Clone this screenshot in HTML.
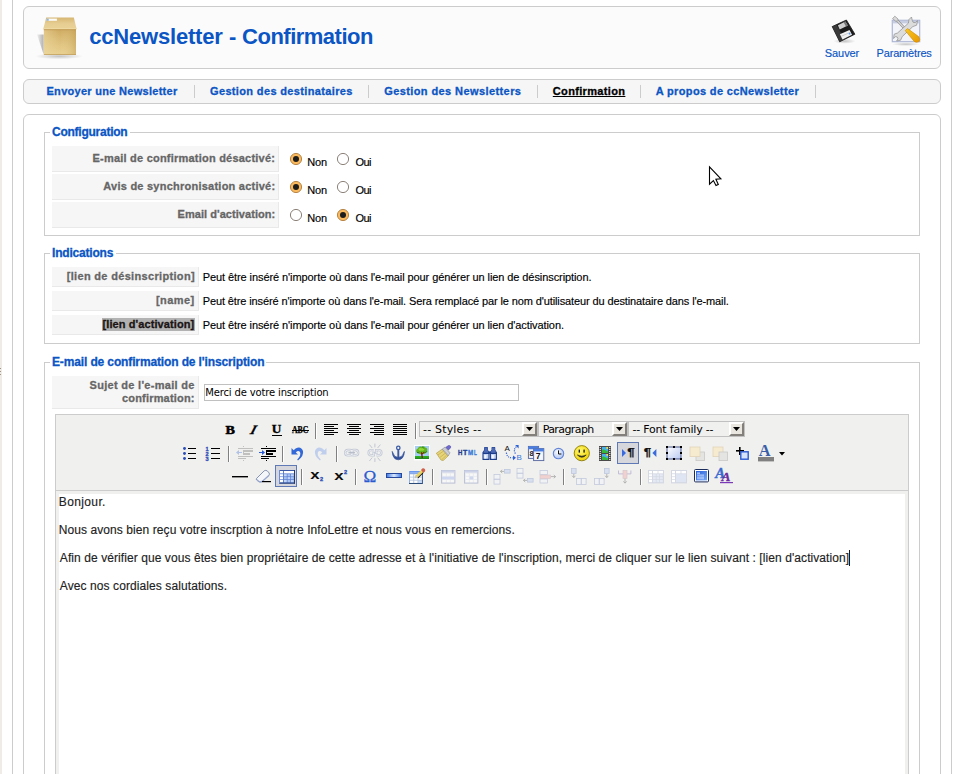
<!DOCTYPE html>
<html lang="fr">
<head>
<meta charset="utf-8">
<title>ccNewsletter - Confirmation</title>
<style>
html,body{margin:0;padding:0;}
body{width:960px;height:774px;overflow:hidden;background:#fff;position:relative;font-family:'Liberation Sans',sans-serif;font-size:11px;color:#333;}
.abs,.t,.box,.ln{position:absolute;}
.t{white-space:nowrap;height:20px;}
.box{border:1px solid #ccc;border-radius:6px;box-sizing:border-box;}
.fs{position:absolute;border:1px solid #ccc;box-sizing:border-box;}
.lg{position:absolute;background:#fff;height:14px;}
.key{position:absolute;background:#f6f6f6;border-bottom:1px solid #e9e9e9;border-right:1px solid #e9e9e9;box-sizing:border-box;}
.ln{background:#ccc;}
.radio{position:absolute;width:13px;height:13px;}

</style>
</head>
<body>
<div class="abs" style="left:0;top:0;width:2px;height:774px;background:#efebe7"></div>
<div class="abs" style="left:0;top:368px;width:1px;height:1px;background:#a39585"></div>
<div class="abs" style="left:0;top:371px;width:1px;height:1px;background:#a39585"></div>
<div class="abs" style="left:0;top:374px;width:1px;height:1px;background:#a39585"></div>
<div class="ln" style="left:12px;top:0;width:1px;height:774px"></div>
<div class="ln" style="left:951px;top:0;width:1px;height:774px"></div>

<div class="box" id="toolbar-box" style="left:23px;top:6px;width:918px;height:63px;background:#fbfbfb"></div>
<div class="box" id="submenu-box" style="left:23px;top:79px;width:918px;height:25px;background:#f6f6f6"></div>
<div class="box" id="element-box" style="left:23px;top:114px;width:918px;height:700px;background:#fff"></div>

<div class="ln" style="left:194px;top:85px;width:1px;height:13px"></div>
<div class="ln" style="left:368px;top:85px;width:1px;height:13px"></div>
<div class="ln" style="left:537px;top:85px;width:1px;height:13px"></div>
<div class="ln" style="left:640px;top:85px;width:1px;height:13px"></div>
<div class="ln" style="left:815px;top:85px;width:1px;height:13px"></div>

<div class="fs" style="left:44px;top:132px;width:876px;height:104px"></div>
<div class="lg" style="left:50px;top:125px;width:80px"></div>
<div class="key" style="left:52px;top:146px;width:227px;height:26px"></div>
<div class="key" style="left:52px;top:174px;width:227px;height:26px"></div>
<div class="key" style="left:52px;top:202px;width:227px;height:26px"></div>

<div class="fs" style="left:44px;top:253px;width:876px;height:91px"></div>
<div class="lg" style="left:50px;top:246px;width:66px"></div>
<div class="key" style="left:52px;top:267px;width:147px;height:20px"></div>
<div class="key" style="left:52px;top:291px;width:147px;height:20px"></div>
<div class="key" style="left:52px;top:315px;width:147px;height:20px"></div>
<div class="abs" style="left:101.5px;top:318px;width:93.5px;height:13px;background:#b2b2b2"></div>

<div class="fs" style="left:44px;top:362px;width:876px;height:500px"></div>
<div class="lg" style="left:50px;top:355px;width:216px"></div>
<div class="key" style="left:52px;top:376px;width:147px;height:33px"></div>
<div class="abs" style="left:204px;top:384px;width:315px;height:17px;box-sizing:border-box;border:1px solid #c0c0c0;background:#fff"></div>

<div class="abs" id="editor" style="left:55px;top:414px;width:854px;height:400px;box-sizing:border-box;border:1px solid #ccc;background:#f0f0ee"></div>
<div class="ln" style="left:56px;top:490px;width:852px;height:1px"></div>
<div class="abs" style="left:59px;top:494px;width:846px;height:300px;background:#fff"></div>
<div class="abs" style="left:849px;top:550px;width:1px;height:16px;background:#1a1a1a"></div>

<svg class="abs" style="left:0;top:0;pointer-events:none" width="960" height="774" viewBox="0 0 960 774">
<defs>
<linearGradient id="gFlap" x1="0" y1="0" x2="0" y2="1"><stop offset="0" stop-color="#d6b671"/><stop offset="0.5" stop-color="#e6cc90"/><stop offset="1" stop-color="#ead398"/></linearGradient>
<linearGradient id="gFront" x1="0" y1="0" x2="0.25" y2="1"><stop offset="0" stop-color="#c8a258"/><stop offset="0.45" stop-color="#d9ba74"/><stop offset="1" stop-color="#e8cf90"/></linearGradient>
<linearGradient id="gFrontX" x1="0" y1="0" x2="1" y2="0"><stop offset="0" stop-color="#f0dca4" stop-opacity="0.6"/><stop offset="0.5" stop-color="#f0dca4" stop-opacity="0"/><stop offset="1" stop-color="#b08838" stop-opacity="0.35"/></linearGradient>
<linearGradient id="gShad" x1="0" y1="0" x2="1" y2="0"><stop offset="0" stop-color="#000" stop-opacity="0.04"/><stop offset="1" stop-color="#000" stop-opacity="0.3"/></linearGradient>
<radialGradient id="gGround"><stop offset="0" stop-color="#000" stop-opacity="0.22"/><stop offset="1" stop-color="#000" stop-opacity="0"/></radialGradient>
<linearGradient id="gLayer" x1="0" y1="0" x2="1" y2="1"><stop offset="0" stop-color="#fff"/><stop offset="1" stop-color="#b8c8f0"/></linearGradient>
<linearGradient id="gBar" x1="0" y1="0" x2="1" y2="0"><stop offset="0" stop-color="#3a78e8"/><stop offset="0.5" stop-color="#dce8fc"/><stop offset="1" stop-color="#3a78e8"/></linearGradient>
<linearGradient id="gHandle" x1="0" y1="0" x2="1" y2="1"><stop offset="0" stop-color="#f8c820"/><stop offset="1" stop-color="#e89800"/></linearGradient>
<radialGradient id="gSmile" cx="0.4" cy="0.35" r="0.7"><stop offset="0" stop-color="#fff870"/><stop offset="1" stop-color="#f0d000"/></radialGradient>
<radialGradient id="gClock" cx="0.4" cy="0.35" r="0.7"><stop offset="0" stop-color="#fff"/><stop offset="1" stop-color="#a8c0f0"/></radialGradient>
<linearGradient id="gFull" x1="0" y1="0" x2="1" y2="1"><stop offset="0" stop-color="#2860d8"/><stop offset="1" stop-color="#78a8f8"/></linearGradient>
</defs>
<ellipse cx="59" cy="56.3" rx="24" ry="3" fill="url(#gGround)"/>
<polygon points="37,34.5 43.6,34.5 43.6,54.3" fill="url(#gShad)"/>
<rect x="43.9" y="28.8" width="32.1" height="25.9" fill="url(#gFront)"/>
<rect x="43.9" y="28.8" width="32.1" height="25.9" fill="url(#gFrontX)"/>
<polygon points="46.2,17.4 73.8,17.4 76.7,29.3 43.2,29.3" fill="url(#gFlap)"/>
<rect x="43.3" y="28.3" width="33.3" height="0.9" fill="#f0dca8"/>
<rect x="43.9" y="29.2" width="32.1" height="1" fill="#bf9a52" opacity="0.85"/>
<rect x="43.9" y="54" width="32.1" height="0.8" fill="#b8924a" opacity="0.8"/>
<rect x="46.9" y="18.6" width="10" height="2.2" fill="#fbfbfb"/>
<rect x="46.9" y="18.6" width="1.8" height="2.2" fill="#86b8f6"/>
<ellipse cx="844.5" cy="41.2" rx="11" ry="2.6" fill="url(#gGround)"/>
<polygon points="832.2,26.6 846.4,20 854.9,34.2 839.7,41.8" fill="#1c1c1c" stroke="#1c1c1c" stroke-width="0.8" stroke-linejoin="round"/>
<polygon points="832.6,26.6 836.5,24.8 844.5,39.2 839.8,41.4" fill="#3a3a3a"/>
<polygon points="837.9,25.3 845.4,21.4 847.8,25.6 839.7,29.6" fill="#cfcfcf"/>
<polygon points="843.6,22.3 845.4,21.4 847.8,25.6 846,26.5" fill="#777"/>
<polygon points="839.9,34.3 849.5,30 852,34.7 842.5,39.4" fill="#f2f2f2"/>
<polygon points="840.9,36.1 850.5,31.8 850.8,32.4 841.2,36.7" fill="#c8c8c8"/>
<circle cx="849.6" cy="33.7" r="0.9" fill="#5a96f0"/>
<ellipse cx="906" cy="44.2" rx="14" ry="1.8" fill="url(#gGround)"/>
<rect x="892.3" y="20.3" width="27.4" height="21.4" fill="#f3f4fa" stroke="#aeb7d4" stroke-width="1.2"/>
<rect x="892.8" y="20.8" width="26.4" height="2.6" fill="#c8cee2"/>
<path d="M896.4,19.6 L905.8,29.6" stroke="#8a8a8a" stroke-width="2.4" fill="none"/>
<path d="M896.4,19.6 L905.8,29.6" stroke="#e4e4e4" stroke-width="1.1" fill="none"/>
<polygon points="892.6,18.6 894.8,16.2 898.2,19.2 896.2,21.6" fill="#dcdcdc" stroke="#8e8e8e" stroke-width="0.7"/>
<path d="M911.5,17 L909,19.5 L908.4,23.2 L897.5,33 L894.2,34.2 L893.5,38.5 L895.6,36.6 L897.2,37 L898,38.8 L896.6,41 L900.6,40.2 L902.2,36.6 L912.8,26.6 L916.6,25.2 L917.6,20.6 L915.2,22.6 L913,22.2 L912.2,20.2 Z" fill="#dcdcdc" stroke="#949494" stroke-width="0.8" stroke-linejoin="round"/>
<path d="M905.2,30.6 L907.6,28.6 L918.6,36.6 Q920.6,39.6 919,41.6 Q916.6,43 914.2,41.4 Z" fill="url(#gHandle)" stroke="#d08800" stroke-width="0.6"/>
<path d="M709.5,166.8 L709.5,184.2 L713.4,180.6 L716,185.6 L718.3,184.4 L715.9,179.3 L720.9,178.9 Z" fill="#fff" stroke="#000" stroke-width="1.1" stroke-linejoin="miter"/>
<circle cx="296" cy="159" r="5.6" fill="#f9b95c" stroke="#b78648" stroke-width="1"/>
<circle cx="296" cy="159" r="3" fill="#1c1c1c"/>
<circle cx="343" cy="159" r="5.6" fill="#fff" stroke="#8c8279" stroke-width="1"/>
<circle cx="296" cy="187" r="5.6" fill="#f9b95c" stroke="#b78648" stroke-width="1"/>
<circle cx="296" cy="187" r="3" fill="#1c1c1c"/>
<circle cx="343" cy="187" r="5.6" fill="#fff" stroke="#8c8279" stroke-width="1"/>
<circle cx="296" cy="215" r="5.6" fill="#fff" stroke="#8c8279" stroke-width="1"/>
<circle cx="343" cy="215" r="5.6" fill="#f9b95c" stroke="#b78648" stroke-width="1"/>
<circle cx="343" cy="215" r="3" fill="#1c1c1c"/>
<rect x="419.5" y="421.5" width="118" height="15" fill="#f0f0ee" stroke="#c0c0c0"/>
<rect x="522" y="422" width="15" height="14" fill="#e9e5df"/>
<polygon points="522,422 537,422 535,424 524,424 524,434 522,436" fill="#fff"/>
<polygon points="537,422 537,436 522,436 524,434 535,434 535,424" fill="#837f7a"/>
<polygon points="526,427 533,427 529.5,431" fill="#000"/>
<rect x="538.5" y="421.5" width="89" height="15" fill="#f0f0ee" stroke="#c0c0c0"/>
<rect x="612" y="422" width="15" height="14" fill="#e9e5df"/>
<polygon points="612,422 627,422 625,424 614,424 614,434 612,436" fill="#fff"/>
<polygon points="627,422 627,436 612,436 614,434 625,434 625,424" fill="#837f7a"/>
<polygon points="616,427 623,427 619.5,431" fill="#000"/>
<rect x="628.5" y="421.5" width="116" height="15" fill="#f0f0ee" stroke="#c0c0c0"/>
<rect x="729" y="422" width="15" height="14" fill="#e9e5df"/>
<polygon points="729,422 744,422 742,424 731,424 731,434 729,436" fill="#fff"/>
<polygon points="744,422 744,436 729,436 731,434 742,434 742,424" fill="#837f7a"/>
<polygon points="733,427 740,427 736.5,431" fill="#000"/>
<text x="225.6" y="434" font-family="'Liberation Serif',serif" font-size="12.9" font-weight="bold" font-style="normal" fill="#000" stroke="#000" stroke-width="0.55" textLength="9.4" lengthAdjust="spacingAndGlyphs">B</text>
<g transform="translate(249.1,434) skewX(-27)">
<text x="0" y="0" font-family="'Liberation Serif',serif" font-size="12.9" font-weight="bold" font-style="normal" fill="#000" stroke="#000" stroke-width="0.3">I</text>
</g>
<text x="271.8" y="433" font-family="'Liberation Serif',serif" font-size="13.2" font-weight="bold" font-style="normal" fill="#000" stroke="#000" stroke-width="0.35" textLength="9.6" lengthAdjust="spacingAndGlyphs">U</text>
<rect x="272" y="435" width="10" height="1" fill="#000" />
<text x="292" y="433.2" font-family="'Liberation Serif',serif" font-size="9.4" font-weight="bold" font-style="normal" fill="#000" stroke="#000" stroke-width="0.25" textLength="16.4" lengthAdjust="spacingAndGlyphs">ABC</text>
<rect x="292" y="430" width="17" height="1" fill="#000" />
<rect x="315" y="423" width="1" height="16" fill="#808080" />
<rect x="316" y="423" width="1" height="16" fill="#fff" />
<rect x="324" y="424" width="14" height="1" fill="#000" />
<rect x="347" y="424" width="14" height="1" fill="#000" />
<rect x="370" y="424" width="14" height="1" fill="#000" />
<rect x="393" y="424" width="14" height="1" fill="#000" />
<rect x="324" y="426" width="10" height="1" fill="#000" />
<rect x="349" y="426" width="10" height="1" fill="#000" />
<rect x="374" y="426" width="10" height="1" fill="#000" />
<rect x="393" y="426" width="14" height="1" fill="#000" />
<rect x="324" y="428" width="14" height="1" fill="#000" />
<rect x="347" y="428" width="14" height="1" fill="#000" />
<rect x="370" y="428" width="14" height="1" fill="#000" />
<rect x="393" y="428" width="14" height="1" fill="#000" />
<rect x="324" y="430" width="10" height="1" fill="#000" />
<rect x="349" y="430" width="10" height="1" fill="#000" />
<rect x="374" y="430" width="10" height="1" fill="#000" />
<rect x="393" y="430" width="14" height="1" fill="#000" />
<rect x="324" y="432" width="14" height="1" fill="#000" />
<rect x="347" y="432" width="14" height="1" fill="#000" />
<rect x="370" y="432" width="14" height="1" fill="#000" />
<rect x="393" y="432" width="14" height="1" fill="#000" />
<rect x="324" y="434" width="10" height="1" fill="#000" />
<rect x="349" y="434" width="10" height="1" fill="#000" />
<rect x="374" y="434" width="10" height="1" fill="#000" />
<rect x="393" y="434" width="14" height="1" fill="#000" />
<rect x="415" y="423" width="1" height="16" fill="#808080" />
<rect x="416" y="423" width="1" height="16" fill="#fff" />
<circle cx="184.5" cy="448.5" r="1.45" fill="#2a4cb8"/>
<rect x="188" y="448" width="8" height="1" fill="#000" />
<circle cx="184.5" cy="453.5" r="1.45" fill="#2a4cb8"/>
<rect x="188" y="453" width="8" height="1" fill="#000" />
<circle cx="184.5" cy="458.5" r="1.45" fill="#2a4cb8"/>
<rect x="188" y="458" width="8" height="1" fill="#000" />
<rect x="211" y="448" width="9" height="1" fill="#000" />
<rect x="211" y="453" width="9" height="1" fill="#000" />
<rect x="211" y="458" width="9" height="1" fill="#000" />
<text x="205.6" y="451" font-family="'Liberation Sans',sans-serif" font-size="5.6" font-weight="bold" font-style="normal" fill="#2a4cb8" stroke="#2a4cb8" stroke-width="0.3">1</text>
<text x="205.6" y="456" font-family="'Liberation Sans',sans-serif" font-size="5.6" font-weight="bold" font-style="normal" fill="#2a4cb8" stroke="#2a4cb8" stroke-width="0.3">2</text>
<text x="205.6" y="461" font-family="'Liberation Sans',sans-serif" font-size="5.6" font-weight="bold" font-style="normal" fill="#2a4cb8" stroke="#2a4cb8" stroke-width="0.3">3</text>
<rect x="228" y="446" width="1" height="16" fill="#808080" />
<rect x="229" y="446" width="1" height="16" fill="#fff" />
<g opacity="0.45">
<rect x="238" y="448" width="15" height="1" fill="#888" />
<rect x="243" y="450" width="10" height="2" fill="#888" />
<rect x="243" y="453" width="7" height="2" fill="#888" />
<rect x="238" y="456" width="15" height="1" fill="#888" />
<rect x="238" y="458" width="8" height="1" fill="#888" />
<rect x="243" y="446" width="1" height="1" fill="#888" />
<rect x="243" y="448" width="1" height="1" fill="#888" />
<rect x="243" y="450" width="1" height="1" fill="#888" />
<rect x="243" y="452" width="1" height="1" fill="#888" />
<rect x="243" y="454" width="1" height="1" fill="#888" />
<rect x="243" y="456" width="1" height="1" fill="#888" />
<rect x="243" y="458" width="1" height="1" fill="#888" />
<rect x="243" y="460" width="1" height="1" fill="#888" />
<path d="M242,452 h-3 v-2 l-3,2.5 l3,2.5 v-2 h3 z" fill="#6a8ad8"/>
</g>
<g opacity="1">
<rect x="261" y="448" width="15" height="1" fill="#000" />
<rect x="266" y="450" width="10" height="2" fill="#000" />
<rect x="266" y="453" width="7" height="2" fill="#000" />
<rect x="261" y="456" width="15" height="1" fill="#000" />
<rect x="261" y="458" width="8" height="1" fill="#000" />
<rect x="266" y="446" width="1" height="1" fill="#000" />
<rect x="266" y="448" width="1" height="1" fill="#000" />
<rect x="266" y="450" width="1" height="1" fill="#000" />
<rect x="266" y="452" width="1" height="1" fill="#000" />
<rect x="266" y="454" width="1" height="1" fill="#000" />
<rect x="266" y="456" width="1" height="1" fill="#000" />
<rect x="266" y="458" width="1" height="1" fill="#000" />
<rect x="266" y="460" width="1" height="1" fill="#000" />
<path d="M259,452 h3 v-2 l3,2.5 l-3,2.5 v-2 h-3 z" fill="#2a5ad8"/>
</g>
<rect x="282" y="446" width="1" height="16" fill="#808080" />
<rect x="283" y="446" width="1" height="16" fill="#fff" />
<g transform="" opacity="1"><path d="M291.5,448 L291.5,454.5 L298,454.5 L295.8,452.4 Q298.2,449.8 300,452 Q301.4,455.5 297.2,459.6 L298,460.4 Q304,456 303,451 Q301,445.6 295.6,448.4 L293.6,450.2 Z" fill="#3268d8"/></g>
<g transform="translate(642,0) scale(-1,1)" opacity="0.8"><path d="M315.5,448 L315.5,454.5 L322,454.5 L319.8,452.4 Q322.2,449.8 324,452 Q325.4,455.5 321.2,459.6 L322,460.4 Q328,456 327,451 Q325,445.6 319.6,448.4 L317.6,450.2 Z" fill="#b4c6ec"/></g>
<rect x="336" y="446" width="1" height="16" fill="#808080" />
<rect x="337" y="446" width="1" height="16" fill="#fff" />
<g fill="none" stroke="#c2c7d4" stroke-width="2.3"><rect x="345.2" y="450" width="7.4" height="5.4" rx="2.7"/><rect x="350.8" y="450" width="7.4" height="5.4" rx="2.7"/></g>
<g fill="none" stroke="#f4f5f8" stroke-width="0.8"><rect x="345.2" y="450" width="7.4" height="5.4" rx="2.7"/><rect x="350.8" y="450" width="7.4" height="5.4" rx="2.7"/></g>
<rect x="348.4" y="452.1" width="6.6" height="1.2" fill="#b4bac8"/>
<g fill="none" stroke="#c2c7d4" stroke-width="2.3"><path d="M373.6,450.2 h-2.4 a2.6,2.6 0 0 0 0,5.2 h2.6 v-2.4 h-1.6"/><path d="M376.4,455.4 h2.4 a2.6,2.6 0 0 0 0,-5.2 h-2.6 v2.4 h1.6"/></g>
<g fill="none" stroke="#f4f5f8" stroke-width="0.8"><path d="M373.6,450.2 h-2.4 a2.6,2.6 0 0 0 0,5.2 h2.6 v-2.4 h-1.6"/><path d="M376.4,455.4 h2.4 a2.6,2.6 0 0 0 0,-5.2 h-2.6 v2.4 h1.6"/></g>
<g stroke="#bcc1ce" stroke-width="0.9"><path d="M369.4,444.6 l2.8,3.4 M380.4,444.6 l-2.8,3.4 M374.9,443.6 v3.8 M369.4,461 l2.8,-3.4 M380.4,461 l-2.8,-3.4 M374.9,462 v-3.8"/></g>
<circle cx="398.3" cy="447.9" r="1.7" fill="none" stroke="#3a5aa4" stroke-width="1.3"/>
<path d="M398.3,449.8 V458.6" stroke="#3a5aa4" stroke-width="1.9" fill="none"/>
<path d="M392.2,451.4 Q392.6,459.4 398.3,459.8 Q404,459.4 404.4,451.4 L403,454.2 Q402.6,457 398.3,457.4 Q394,457 393.6,454.2 Z" fill="#33509a" stroke="#33509a" stroke-width="0.7" stroke-linejoin="round"/>
<rect x="414" y="445" width="16" height="15.4" fill="#fff" />
<rect x="415" y="446" width="14" height="10" fill="#a4cef4" />
<rect x="415" y="456" width="14" height="2.8" fill="#28b020" />
<rect x="415" y="457.8" width="14" height="1" fill="#187818" />
<path d="M416.4,452 q-1,-2.6 1.6,-3.6 q0.6,-2.4 3.4,-1.6 q2.4,-1.2 3.8,0.6 q2.6,0.4 2,2.8 q1,2 -1.4,2.8 q-1.6,1.6 -3.6,0.6 q-2,1.4 -3.6,0 q-2,-0.2 -2.2,-1.6 z" fill="#62b41e"/>
<path d="M418.4,449.4 q1.6,-2 3.6,-1 q2,-0.6 2.4,1 q-1,1.6 -3,1.2 q-2,0.8 -3,-1.2z" fill="#94dc34"/>
<path d="M417,452.4 q1.4,0.6 2.4,-0.2 M424.6,452.6 q1.4,0 2,-1.2 M422.4,447 q1,0.4 1.2,1.4" stroke="#206820" stroke-width="0.8" fill="none"/>
<path d="M420.8,452.4 l0.9,5.6 h1.3 l-0.5,-3.4 l2.2,-2.4 l-0.7,-0.5 l-1.7,1.6 l-0.5,-1.4 z" fill="#8a1c14"/>
<g transform="translate(0,1.2)">
<path d="M436.4,452 l5.8,-4 l6,6.6 l-4.6,4.4 q-1.6,0.6 -2.8,-0.4 z" fill="#e6d47a" stroke="#a89030" stroke-width="0.6" stroke-linejoin="round"/>
<path d="M438,453.8 l5.6,-4 M440,456.2 l5.8,-4.6 M442,458.2 l4.6,-4.2" stroke="#c4aa48" stroke-width="0.7"/>
<path d="M442.2,448 l3,-2.2 l4.8,5.8 l-1.8,3 z" fill="#d4d6dc" stroke="#70747c" stroke-width="0.5"/>
<path d="M443.4,447.6 l4.8,5.8 M444.6,446.6 l4.8,5.8" stroke="#9a9ca6" stroke-width="0.4"/>
<path d="M446,446 l2.4,-1.6 q1.2,-0.4 2,0.4 q0.7,1 0,1.9 l-2,2.2 z" fill="#6e6ad0" stroke="#3e3a98" stroke-width="0.5"/>
</g>
<text x="458" y="454.9" font-family="'Liberation Sans',sans-serif" font-size="7.2" font-weight="bold" font-style="normal" fill="#1e3e90" stroke="#1e3e90" stroke-width="0.35" textLength="4.3" lengthAdjust="spacingAndGlyphs">H</text>
<text x="463" y="454.9" font-family="'Liberation Sans',sans-serif" font-size="7.2" font-weight="bold" font-style="normal" fill="#1e3e90" stroke="#1e3e90" stroke-width="0.35" textLength="4.3" lengthAdjust="spacingAndGlyphs">T</text>
<text x="468.1" y="454.9" font-family="'Liberation Sans',sans-serif" font-size="7.2" font-weight="bold" font-style="normal" fill="#3a7ad8" stroke="#3a7ad8" stroke-width="0.35" textLength="5.2" lengthAdjust="spacingAndGlyphs">M</text>
<text x="474" y="454.9" font-family="'Liberation Sans',sans-serif" font-size="7.2" font-weight="bold" font-style="normal" fill="#3a7ad8" stroke="#3a7ad8" stroke-width="0.35" textLength="2.8" lengthAdjust="spacingAndGlyphs">L</text>
<path d="M484.7,447.6 h2.6 v2.4 l1.7,2.6 v6.8 h-6 v-6.8 l1.7,-2.6 z" fill="#c4d4f4" stroke="#1c3c8c" stroke-width="1.1" stroke-linejoin="round"/>
<path d="M484.7,447.6 h2.6 v2.4 l1.7,2.6 h-6 l1.7,-2.6 z" fill="#4a68b4"/>
<rect x="483.0" y="452.4" width="6" height="1.6" fill="#1c3c8c"/>
<rect x="484.40000000000003" y="455" width="2" height="3.6" fill="#fff" opacity="0.8"/>
<path d="M492.09999999999997,447.6 h2.6 v2.4 l1.7,2.6 v6.8 h-6 v-6.8 l1.7,-2.6 z" fill="#c4d4f4" stroke="#1c3c8c" stroke-width="1.1" stroke-linejoin="round"/>
<path d="M492.09999999999997,447.6 h2.6 v2.4 l1.7,2.6 h-6 l1.7,-2.6 z" fill="#4a68b4"/>
<rect x="490.4" y="452.4" width="6" height="1.6" fill="#1c3c8c"/>
<rect x="491.8" y="455" width="2" height="3.6" fill="#fff" opacity="0.8"/>
<rect x="488.6" y="451.4" width="2.2" height="2.4" fill="#1c3c8c"/>
<text x="504.6" y="451.4" font-family="'Liberation Sans',sans-serif" font-size="8" font-weight="normal" font-style="normal" fill="#111" >A</text>
<text x="516.6" y="459.6" font-family="'Liberation Sans',sans-serif" font-size="8" font-weight="normal" font-style="normal" fill="#3a78e0" >B</text>
<path d="M506.4,452.6 q0.4,5.6 6.4,5.2" fill="none" stroke="#2a60d8" stroke-width="1.2" stroke-dasharray="1.1,1.1"/>
<path d="M513,455.4 l3,2.4 l-3,2.4 z" fill="#2a60d8"/>
<path d="M515.4,453.6 q-2.6,-4.4 1.6,-7.4" fill="none" stroke="#2a60d8" stroke-width="1.2" stroke-dasharray="1.1,1.1"/>
<path d="M515.2,445 h3.4 v3.4 z" fill="#2a60d8"/>
<rect x="528.4" y="446.4" width="10.2" height="12" fill="#e6ecf8" stroke="#56669e" stroke-width="0.9"/>
<rect x="528.4" y="446.4" width="10.2" height="2.8" fill="#4a7ee0" />
<rect x="529.6" y="450.4" width="7.8" height="7" fill="#f6f8fc" />
<text x="529.4" y="456" font-family="'Liberation Sans',sans-serif" font-size="7.6" font-weight="bold" font-style="normal" fill="#222" >8</text>
<rect x="533.6" y="448.6" width="10.2" height="12" fill="#e6ecf8" stroke="#56669e" stroke-width="0.9"/>
<rect x="533.6" y="448.6" width="10.2" height="2.8" fill="#4a7ee0" />
<rect x="534.8000000000001" y="452.6" width="7.8" height="7" fill="#f6f8fc" />
<text x="535.8000000000001" y="459.40000000000003" font-family="'Liberation Sans',sans-serif" font-size="8.6" font-weight="bold" font-style="normal" fill="#111" >7</text>
<circle cx="558.5" cy="453.6" r="5.2" fill="url(#gClock)" stroke="#6484d4" stroke-width="1.1"/>
<path d="M558.5,450.4 V454 H561.4" fill="none" stroke="#111" stroke-width="1"/>
<circle cx="581.8" cy="453.2" r="7.6" fill="url(#gSmile)" stroke="#8a7a08" stroke-width="0.9"/>
<rect x="578.6" y="449.6" width="1.4" height="3" fill="#222"/><rect x="583.4" y="449.6" width="1.4" height="3" fill="#222"/>
<path d="M577.4,455 q4.4,4.6 8.8,0 q-4.4,2.4 -8.8,0z" fill="#222" stroke="#222" stroke-width="0.6"/>
<rect x="599" y="446" width="12" height="15" fill="#4a4a4a" />
<rect x="599.6" y="447" width="1.4" height="1" fill="#d8d8d8" />
<rect x="609" y="447" width="1.4" height="1" fill="#d8d8d8" />
<rect x="599.6" y="449" width="1.4" height="1" fill="#d8d8d8" />
<rect x="609" y="449" width="1.4" height="1" fill="#d8d8d8" />
<rect x="599.6" y="451" width="1.4" height="1" fill="#d8d8d8" />
<rect x="609" y="451" width="1.4" height="1" fill="#d8d8d8" />
<rect x="599.6" y="453" width="1.4" height="1" fill="#d8d8d8" />
<rect x="609" y="453" width="1.4" height="1" fill="#d8d8d8" />
<rect x="599.6" y="455" width="1.4" height="1" fill="#d8d8d8" />
<rect x="609" y="455" width="1.4" height="1" fill="#d8d8d8" />
<rect x="599.6" y="457" width="1.4" height="1" fill="#d8d8d8" />
<rect x="609" y="457" width="1.4" height="1" fill="#d8d8d8" />
<rect x="599.6" y="459" width="1.4" height="1" fill="#d8d8d8" />
<rect x="609" y="459" width="1.4" height="1" fill="#d8d8d8" />
<rect x="602" y="447" width="6" height="6" fill="#48b0e8" />
<path d="M602,453 v-3 l1.6,-0.8 l4.4,2.4 v1.4 z" fill="#38b838"/>
<rect x="606.4" y="447" width="1.6" height="1.8" fill="#f8e040" />
<rect x="602" y="454" width="6" height="6" fill="#48b0e8" />
<path d="M602,460 v-3 l1.6,-0.8 l4.4,2.4 v1.4 z" fill="#38b838"/>
<rect x="606.4" y="454" width="1.6" height="1.8" fill="#f8e040" />
<rect x="617.5" y="442.5" width="21" height="21" fill="#d5d7dc" stroke="#5f78b6"/>
<path d="M622,449 l4,4 l-4,4 z" fill="#3a6ae0"/>
<text x="627.2" y="456.2" font-family="'Liberation Sans',sans-serif" font-size="10.8" font-weight="bold" font-style="normal" fill="#111" stroke="#111" stroke-width="0.25" textLength="7.4" lengthAdjust="spacingAndGlyphs">¶</text>
<text x="643.8" y="456.2" font-family="'Liberation Sans',sans-serif" font-size="10.8" font-weight="bold" font-style="normal" fill="#111" stroke="#111" stroke-width="0.25" textLength="7.4" lengthAdjust="spacingAndGlyphs">¶</text>
<path d="M656.4,449 l-4,4 l4,4 z" fill="#3a6ae0"/>
<rect x="667" y="447" width="14" height="12" fill="url(#gLayer)" stroke="#3a4a80" stroke-width="0.9"/>
<rect x="666" y="446" width="2" height="2" fill="#000" />
<rect x="673" y="446" width="2" height="2" fill="#000" />
<rect x="680" y="446" width="2" height="2" fill="#000" />
<rect x="666" y="452" width="2" height="2" fill="#000" />
<rect x="680" y="452" width="2" height="2" fill="#000" />
<rect x="666" y="458" width="2" height="2" fill="#000" />
<rect x="673" y="458" width="2" height="2" fill="#000" />
<rect x="680" y="458" width="2" height="2" fill="#000" />
<rect x="696" y="452" width="8.6" height="8.6" fill="#e4e4e2" stroke="#c8c8c8" stroke-width="0.8"/>
<rect x="690" y="447" width="10" height="9.6" fill="#f6ebcf" stroke="#e0d4b8" stroke-width="0.8"/>
<rect x="713" y="447" width="10" height="9.6" fill="#f6ebcf" stroke="#e0d4b8" stroke-width="0.8"/>
<rect x="719" y="452" width="8.6" height="8.6" fill="#e4e4e2" stroke="#c8c8c8" stroke-width="0.8"/>
<rect x="736" y="450" width="8" height="1.6" fill="#000" />
<rect x="739" y="447" width="1.6" height="8" fill="#000" />
<rect x="740.8" y="451.8" width="7.4" height="7.4" fill="#d4e2fa" stroke="#2a5ad0" stroke-width="1.4"/>
<text x="758.8" y="456.2" font-family="'Liberation Serif',serif" font-size="16.4" font-weight="bold" font-style="normal" fill="#3a5ea8" >A</text>
<rect x="758" y="457" width="16" height="4.4" fill="#808080" />
<path d="M779,452 h6 l-3,3.4 z" fill="#000"/>
<rect x="232" y="476" width="16" height="1.4" fill="#000" />
<path d="M256.6,478.4 l7.6,-7.6 q1.6,-0.8 3,0 l2,2.2 q0.6,1.4 -0.4,2.6 l-6.6,6 q-2,0.6 -3.6,0 l-2,-1.6 q-0.6,-0.8 0,-1.6z" fill="#f4f6fa" stroke="#6a7aa0" stroke-width="0.8"/>
<path d="M257,479.6 l2.2,2 q1.4,0.6 3,-0.2 l6.8,-6.2" fill="none" stroke="#98a8d0" stroke-width="1.2"/>
<rect x="262" y="481" width="9" height="1.2" fill="#000" />
<rect x="275.5" y="465.5" width="21" height="21" fill="#d5d7dc" stroke="#5f78b6"/>
<rect x="279" y="470" width="16" height="13.6" fill="#5c80d0" />
<rect x="279" y="470" width="16" height="1" fill="#3a58a6" />
<rect x="279" y="482.6" width="16" height="1" fill="#22386e" />
<rect x="279" y="470" width="1" height="13.6" fill="#6c8cd8" />
<rect x="294" y="470" width="1" height="13.6" fill="#22386e" />
<rect x="280" y="471" width="3" height="2.4" fill="#fff" />
<rect x="284" y="471" width="10" height="2.4" fill="#fff" />
<rect x="280" y="474.2" width="3" height="2.2" fill="#fff" />
<rect x="280" y="477.09999999999997" width="3" height="2.2" fill="#fff" />
<rect x="280" y="480.0" width="3" height="2.2" fill="#fff" />
<rect x="284.0" y="474.2" width="2.8" height="2.2" fill="#c0d4f8" />
<rect x="287.5" y="474.2" width="2.8" height="2.2" fill="#a8c4f6" />
<rect x="291.0" y="474.2" width="2.8" height="2.2" fill="#c0d4f8" />
<rect x="284.0" y="477.09999999999997" width="2.8" height="2.2" fill="#a8c4f6" />
<rect x="287.5" y="477.09999999999997" width="2.8" height="2.2" fill="#c0d4f8" />
<rect x="291.0" y="477.09999999999997" width="2.8" height="2.2" fill="#a8c4f6" />
<rect x="284.0" y="480.0" width="2.8" height="2.2" fill="#c0d4f8" />
<rect x="287.5" y="480.0" width="2.8" height="2.2" fill="#a8c4f6" />
<rect x="291.0" y="480.0" width="2.8" height="2.2" fill="#c0d4f8" />
<rect x="301" y="469" width="1" height="16" fill="#808080" />
<rect x="302" y="469" width="1" height="16" fill="#fff" />
<text x="310.2" y="479.2" font-family="'Liberation Sans',sans-serif" font-size="13.4" font-weight="bold" font-style="normal" fill="#111" textLength="9.4" lengthAdjust="spacingAndGlyphs">x</text>
<text x="320" y="481.4" font-family="'Liberation Sans',sans-serif" font-size="5.6" font-weight="bold" font-style="normal" fill="#2a4cb8" stroke="#2a4cb8" stroke-width="0.3">2</text>
<text x="334.2" y="480.2" font-family="'Liberation Sans',sans-serif" font-size="13.4" font-weight="bold" font-style="normal" fill="#111" textLength="9.4" lengthAdjust="spacingAndGlyphs">x</text>
<text x="344" y="474.4" font-family="'Liberation Sans',sans-serif" font-size="5.6" font-weight="bold" font-style="normal" fill="#2a4cb8" stroke="#2a4cb8" stroke-width="0.3">2</text>
<rect x="355" y="469" width="1" height="16" fill="#808080" />
<rect x="356" y="469" width="1" height="16" fill="#fff" />
<text x="363.4" y="481.6" font-family="'Liberation Serif',serif" font-size="17.2" font-weight="normal" font-style="normal" fill="#2a5ad0" stroke="#2a5ad0" stroke-width="0.3">Ω</text>
<rect x="386.5" y="473.5" width="15" height="4" fill="url(#gBar)" stroke="#26479a" stroke-width="1"/>
<rect x="409" y="471" width="14" height="13" fill="#b4c4dc" />
<rect x="409" y="471" width="14" height="2.6" fill="#6a98f0" />
<rect x="410" y="472" width="10" height="0.8" fill="#98b8f8" />
<rect x="410.0" y="474.4" width="3.3" height="2.3" fill="#fff" />
<rect x="414.2" y="474.4" width="3.3" height="2.3" fill="#fff" />
<rect x="418.4" y="474.4" width="3.3" height="2.3" fill="#fff" />
<rect x="410.0" y="477.5" width="3.3" height="2.3" fill="#fff" />
<rect x="414.2" y="477.5" width="3.3" height="2.3" fill="#fff" />
<rect x="418.4" y="477.5" width="3.3" height="2.3" fill="#fff" />
<rect x="410.0" y="480.59999999999997" width="3.3" height="2.3" fill="#fff" />
<rect x="414.2" y="480.59999999999997" width="3.3" height="2.3" fill="#fff" />
<rect x="418.4" y="480.59999999999997" width="3.3" height="2.3" fill="#c8dcfa" />
<rect x="409" y="483" width="14" height="1" fill="#2a4a78" />
<rect x="422" y="472" width="1" height="12" fill="#41608e" />
<rect x="409" y="471" width="0.8" height="12" fill="#88a8e8" />
<path d="M415.3,477.9 l0.5,-2.4 l5.4,-5.6 l2.2,2.2 l-5.6,5.4 z" fill="#ecd45c"/>
<path d="M417.6,477.6 l5.6,-5.4 l0.5,0.5 l-5.4,5.6 z" fill="#111"/>
<path d="M415.3,477.9 l0.5,-2.4 l2,2 z" fill="#f4f4f4" stroke="#888" stroke-width="0.4"/>
<path d="M421,470 l1.2,-1.4 q1.4,-0.8 2.6,0.4 q1,1.4 0,2.6 l-1.4,1.2 z" fill="#d0604a"/>
<rect x="432" y="469" width="1" height="16" fill="#808080" />
<rect x="433" y="469" width="1" height="16" fill="#fff" />
<g opacity="0.55">
<rect x="441.5" y="470.5" width="13.4" height="12.6" fill="#e3e7f2" stroke="#8a96c0" stroke-width="0.9"/>
<rect x="441.5" y="470.5" width="13.4" height="2" fill="#b0bce6" />
<rect x="442.8" y="473.6" width="3" height="2.2" fill="#fff" />
<rect x="446.8" y="473.6" width="3" height="2.2" fill="#fff" />
<rect x="450.8" y="473.6" width="3" height="2.2" fill="#fff" />
<rect x="442.8" y="476.8" width="3" height="2.2" fill="#fff" />
<rect x="446.8" y="476.8" width="3" height="2.2" fill="#fff" />
<rect x="450.8" y="476.8" width="3" height="2.2" fill="#fff" />
<rect x="442.8" y="480.0" width="3" height="2.2" fill="#fff" />
<rect x="446.8" y="480.0" width="3" height="2.2" fill="#fff" />
<rect x="450.8" y="480.0" width="3" height="2.2" fill="#fff" />
<rect x="442" y="476.6" width="12.4" height="2.8" fill="#b4c4f0" />
<rect x="464.5" y="470.5" width="13.4" height="12.6" fill="#e3e7f2" stroke="#8a96c0" stroke-width="0.9"/>
<rect x="464.5" y="470.5" width="13.4" height="2" fill="#b0bce6" />
<rect x="465.8" y="473.6" width="3" height="2.2" fill="#fff" />
<rect x="469.8" y="473.6" width="3" height="2.2" fill="#fff" />
<rect x="473.8" y="473.6" width="3" height="2.2" fill="#fff" />
<rect x="465.8" y="476.8" width="3" height="2.2" fill="#fff" />
<rect x="469.8" y="476.8" width="3" height="2.2" fill="#fff" />
<rect x="473.8" y="476.8" width="3" height="2.2" fill="#fff" />
<rect x="465.8" y="480.0" width="3" height="2.2" fill="#fff" />
<rect x="469.8" y="480.0" width="3" height="2.2" fill="#fff" />
<rect x="473.8" y="480.0" width="3" height="2.2" fill="#fff" />
<rect x="469.6" y="476.4" width="3.6" height="3" fill="#b4c4f0" />
</g>
<rect x="486" y="469" width="1" height="16" fill="#808080" />
<rect x="487" y="469" width="1" height="16" fill="#fff" />
<g opacity="0.42">
<rect x="494" y="474.5" width="6" height="4.6" fill="#f4f6fc" stroke="#8a9ac8" stroke-width="0.8"/>
<rect x="494" y="479.5" width="6" height="4.6" fill="#f4f6fc" stroke="#8a9ac8" stroke-width="0.8"/>
<rect x="504.5" y="469.5" width="5.6" height="3.6" fill="#b8ccf4" stroke="#7a90c8" stroke-width="0.8"/>
<path d="M504,471.4 h-3.4 m1.6,-1.6 l-1.8,1.6 l1.8,1.6" stroke="#555" stroke-width="0.9" fill="none"/>
<rect x="517" y="468.5" width="6" height="4.6" fill="#f4f6fc" stroke="#8a9ac8" stroke-width="0.8"/>
<rect x="517" y="473.5" width="6" height="4.6" fill="#f4f6fc" stroke="#8a9ac8" stroke-width="0.8"/>
<rect x="527.5" y="478.5" width="5.6" height="3.6" fill="#b8ccf4" stroke="#7a90c8" stroke-width="0.8"/>
<path d="M527,480.4 h-3.4 m1.6,-1.6 l-1.8,1.6 l1.8,1.6" stroke="#555" stroke-width="0.9" fill="none"/>
<rect x="540" y="470.5" width="7.6" height="4" fill="#f4f6fc" stroke="#8a9ac8" stroke-width="0.8"/>
<rect x="540" y="479" width="7.6" height="4" fill="#f4f6fc" stroke="#8a9ac8" stroke-width="0.8"/>
<rect x="540" y="475" width="10.6" height="3.4" fill="#f0a8a8" stroke="#b08898" stroke-width="0.6"/>
<path d="M551,476.6 h4.6 m-1.8,-1.6 l1.8,1.6 l-1.8,1.6" stroke="#555" stroke-width="0.9" fill="none"/>
</g>
<rect x="563" y="469" width="1" height="16" fill="#808080" />
<rect x="564" y="469" width="1" height="16" fill="#fff" />
<g opacity="0.42">
<rect x="571.5" y="468.5" width="4.6" height="5" fill="#b8ccf4" stroke="#7a90c8" stroke-width="0.8"/>
<path d="M573.8,474 v3.4 m-1.6,-1.6 l1.6,1.8 l1.6,-1.8" stroke="#555" stroke-width="0.9" fill="none"/>
<rect x="576.5" y="478.5" width="4.6" height="6" fill="#f4f6fc" stroke="#8a9ac8" stroke-width="0.8"/>
<rect x="581.5" y="478.5" width="4.6" height="6" fill="#f4f6fc" stroke="#8a9ac8" stroke-width="0.8"/>
<rect x="594.5" y="478.5" width="4.6" height="6" fill="#f4f6fc" stroke="#8a9ac8" stroke-width="0.8"/>
<rect x="599.5" y="478.5" width="4.6" height="6" fill="#f4f6fc" stroke="#8a9ac8" stroke-width="0.8"/>
<rect x="604.5" y="468.5" width="4.6" height="5" fill="#b8ccf4" stroke="#7a90c8" stroke-width="0.8"/>
<path d="M606.8,474 v3.4 m-1.6,-1.6 l1.6,1.8 l1.6,-1.8" stroke="#555" stroke-width="0.9" fill="none"/>
<path d="M618.5,470.5 v3.4 h12.4 v-3.4" fill="none" stroke="#7a6ab0" stroke-width="0.9"/>
<rect x="623" y="470.4" width="4" height="8" fill="#f0a8a8" stroke="#b08898" stroke-width="0.6"/>
<path d="M625,478.6 v4.4 m-1.6,-1.6 l1.6,1.8 l1.6,-1.8" stroke="#555" stroke-width="0.9" fill="none"/>
</g>
<rect x="640" y="469" width="1" height="16" fill="#808080" />
<rect x="641" y="469" width="1" height="16" fill="#fff" />
<rect x="648" y="470" width="16" height="13.4" fill="#d3d8e2" />
<rect x="649" y="471" width="3" height="2.4" fill="#fff" />
<rect x="653" y="471" width="4.6" height="2.4" fill="#fff" />
<rect x="658.4" y="471" width="4.6" height="2.4" fill="#fff" />
<rect x="649" y="474.2" width="3" height="2.2" fill="#fff" />
<rect x="649" y="477.09999999999997" width="3" height="2.2" fill="#fff" />
<rect x="649" y="480.0" width="3" height="2.2" fill="#fff" />
<rect x="653.0" y="474.2" width="2.8" height="2.2" fill="#e4e9f4" />
<rect x="656.5" y="474.2" width="2.8" height="2.2" fill="#e4e9f4" />
<rect x="660.0" y="474.2" width="2.8" height="2.2" fill="#e4e9f4" />
<rect x="653.0" y="477.09999999999997" width="2.8" height="2.2" fill="#e4e9f4" />
<rect x="656.5" y="477.09999999999997" width="2.8" height="2.2" fill="#e4e9f4" />
<rect x="660.0" y="477.09999999999997" width="2.8" height="2.2" fill="#e4e9f4" />
<rect x="653.0" y="480.0" width="2.8" height="2.2" fill="#e4e9f4" />
<rect x="656.5" y="480.0" width="2.8" height="2.2" fill="#e4e9f4" />
<rect x="660.0" y="480.0" width="2.8" height="2.2" fill="#e4e9f4" />
<rect x="671" y="470" width="16" height="13.4" fill="#d3d8e2" />
<rect x="672" y="471" width="3" height="2.4" fill="#fff" />
<rect x="676" y="471" width="4.6" height="2.4" fill="#fff" />
<rect x="681.4" y="471" width="4.6" height="2.4" fill="#fff" />
<rect x="672" y="474.2" width="3" height="2.2" fill="#fff" />
<rect x="672" y="477.09999999999997" width="3" height="2.2" fill="#fff" />
<rect x="672" y="480.0" width="3" height="2.2" fill="#fff" />
<rect x="676" y="474.2" width="10" height="8" fill="#dfe5f2" />
<rect x="694.5" y="469.5" width="14" height="12.4" fill="#fff" stroke="#1a2c5c" stroke-width="1" rx="1"/>
<rect x="696" y="471" width="11" height="9.4" fill="url(#gFull)" />
<rect x="697" y="472.6" width="3" height="1" fill="#e8f0ff" />
<rect x="697" y="474.6" width="7" height="1" fill="#c8dcff" />
<rect x="697" y="476.6" width="7" height="1" fill="#c8dcff" />
<rect x="697" y="478.4" width="7" height="0.8" fill="#c8dcff" />
<text x="715.2" y="478.4" font-family="'Liberation Serif',serif" font-size="14.6" font-weight="bold" font-style="italic" fill="#3a6ad0" stroke="#3a6ad0" stroke-width="0.4">A</text>
<text x="721.4" y="481.2" font-family="'Liberation Serif',serif" font-size="13.4" font-weight="bold" font-style="italic" fill="#6a2aa0" stroke="#6a2aa0" stroke-width="0.4">A</text>
<rect x="720" y="482" width="13" height="1.2" fill="#7a3ab8" />
</svg>
<div class="t " id="t0" style="left:89.20px;top:27.00px;font:bold 22px/20px 'Liberation Sans',sans-serif;color:#0b55c4;letter-spacing:-0.191px;">ccNewsletter</div>
<div class="t " id="t1" style="left:228.90px;top:27.00px;font:bold 22px/20px 'Liberation Sans',sans-serif;color:#0b55c4;letter-spacing:0.500px;">-</div>
<div class="t " id="t2" style="left:242.10px;top:27.00px;font:bold 22px/20px 'Liberation Sans',sans-serif;color:#0b55c4;letter-spacing:-0.509px;">Confirmation</div>
<div class="t " id="t3" style="left:46.50px;top:81.00px;font:bold 11px/20px 'Liberation Sans',sans-serif;color:#0b55c4;letter-spacing:0.286px;-webkit-text-stroke:0.3px;">Envoyer une Newsletter</div>
<div class="t " id="t4" style="left:210.00px;top:81.00px;font:bold 11px/20px 'Liberation Sans',sans-serif;color:#0b55c4;letter-spacing:0.354px;-webkit-text-stroke:0.3px;">Gestion des destinataires</div>
<div class="t " id="t5" style="left:384.20px;top:81.00px;font:bold 11px/20px 'Liberation Sans',sans-serif;color:#0b55c4;letter-spacing:0.409px;-webkit-text-stroke:0.3px;">Gestion des Newsletters</div>
<div class="t " id="t6" style="left:552.80px;top:81.00px;font:bold 11px/20px 'Liberation Sans',sans-serif;color:#000;letter-spacing:0.345px;text-decoration:underline;-webkit-text-stroke:0.3px;">Confirmation</div>
<div class="t " id="t7" style="left:655.70px;top:81.00px;font:bold 11px/20px 'Liberation Sans',sans-serif;color:#0b55c4;letter-spacing:0.361px;-webkit-text-stroke:0.3px;">A propos de ccNewsletter</div>
<div class="t " id="t8" style="left:824.80px;top:43.00px;font:normal 11px/20px 'Liberation Sans',sans-serif;color:#0b55c4;letter-spacing:-0.080px;-webkit-text-stroke:0.15px;">Sauver</div>
<div class="t " id="t9" style="left:876.60px;top:43.00px;font:normal 11px/20px 'Liberation Sans',sans-serif;color:#0b55c4;letter-spacing:-0.178px;-webkit-text-stroke:0.15px;">Paramètres</div>
<div class="t " id="t10" style="left:52.00px;top:122.00px;font:bold 12px/20px 'Liberation Sans',sans-serif;color:#0b55c4;letter-spacing:-0.250px;-webkit-text-stroke:0.3px;">Configuration</div>
<div class="t " id="t11" style="left:52.00px;top:243.00px;font:bold 12px/20px 'Liberation Sans',sans-serif;color:#0b55c4;letter-spacing:-0.200px;-webkit-text-stroke:0.3px;">Indications</div>
<div class="t " id="t12" style="left:52.00px;top:352.00px;font:bold 12px/20px 'Liberation Sans',sans-serif;color:#0b55c4;letter-spacing:-0.132px;-webkit-text-stroke:0.3px;">E-mail de confirmation de l'inscription</div>
<div class="t " id="t13" style="left:92.50px;top:148.00px;font:bold 11px/20px 'Liberation Sans',sans-serif;color:#666;letter-spacing:0.219px;-webkit-text-stroke:0.3px;">E-mail de confirmation désactivé:</div>
<div class="t " id="t14" style="left:103.30px;top:176.00px;font:bold 11px/20px 'Liberation Sans',sans-serif;color:#666;letter-spacing:0.240px;-webkit-text-stroke:0.3px;">Avis de synchronisation activé:</div>
<div class="t " id="t15" style="left:177.50px;top:204.00px;font:bold 11px/20px 'Liberation Sans',sans-serif;color:#666;letter-spacing:0.056px;-webkit-text-stroke:0.3px;">Email d'activation:</div>
<div class="t " id="t16" style="left:307.30px;top:151.50px;font:normal 11px/20px 'Liberation Sans',sans-serif;color:#000;letter-spacing:-0.150px;-webkit-text-stroke:0.15px;">Non</div>
<div class="t " id="t17" style="left:355.60px;top:151.50px;font:normal 11px/20px 'Liberation Sans',sans-serif;color:#000;letter-spacing:-0.600px;-webkit-text-stroke:0.15px;">Oui</div>
<div class="t " id="t18" style="left:307.30px;top:179.50px;font:normal 11px/20px 'Liberation Sans',sans-serif;color:#000;letter-spacing:-0.150px;-webkit-text-stroke:0.15px;">Non</div>
<div class="t " id="t19" style="left:355.60px;top:179.50px;font:normal 11px/20px 'Liberation Sans',sans-serif;color:#000;letter-spacing:-0.600px;-webkit-text-stroke:0.15px;">Oui</div>
<div class="t " id="t20" style="left:307.30px;top:207.50px;font:normal 11px/20px 'Liberation Sans',sans-serif;color:#000;letter-spacing:-0.150px;-webkit-text-stroke:0.15px;">Non</div>
<div class="t " id="t21" style="left:355.60px;top:207.50px;font:normal 11px/20px 'Liberation Sans',sans-serif;color:#000;letter-spacing:-0.600px;-webkit-text-stroke:0.15px;">Oui</div>
<div class="t " id="t22" style="left:66.70px;top:266.00px;font:bold 11px/20px 'Liberation Sans',sans-serif;color:#666;letter-spacing:0.326px;-webkit-text-stroke:0.3px;">[lien de désinscription]</div>
<div class="t " id="t23" style="left:156.00px;top:290.00px;font:bold 11px/20px 'Liberation Sans',sans-serif;color:#666;letter-spacing:0.440px;-webkit-text-stroke:0.3px;">[name]</div>
<div class="t " id="t24" style="left:102.50px;top:314.00px;font:bold 11px/20px 'Liberation Sans',sans-serif;color:#1c1414;letter-spacing:0.094px;-webkit-text-stroke:0.3px;">[lien d'activation]</div>
<div class="t " id="t25" style="left:202.70px;top:267.00px;font:normal 11px/20px 'Liberation Sans',sans-serif;color:#000;letter-spacing:-0.082px;-webkit-text-stroke:0.15px;">Peut être inséré n'importe où dans l'e-mail pour générer un lien de désinscription.</div>
<div class="t " id="t26" style="left:202.70px;top:291.00px;font:normal 11px/20px 'Liberation Sans',sans-serif;color:#000;letter-spacing:-0.115px;-webkit-text-stroke:0.15px;">Peut être inséré n'importe où dans l'e-mail. Sera remplacé par le nom d'utilisateur du destinataire dans l'e-mail.</div>
<div class="t " id="t27" style="left:202.70px;top:315.00px;font:normal 11px/20px 'Liberation Sans',sans-serif;color:#000;letter-spacing:-0.083px;-webkit-text-stroke:0.15px;">Peut être inséré n'importe où dans l'e-mail pour générer un lien d'activation.</div>
<div class="t " id="t28" style="left:89.50px;top:375.00px;font:bold 11px/20px 'Liberation Sans',sans-serif;color:#666;letter-spacing:0.300px;-webkit-text-stroke:0.3px;">Sujet de l'e-mail de</div>
<div class="t " id="t29" style="left:122.00px;top:388.00px;font:bold 11px/20px 'Liberation Sans',sans-serif;color:#666;letter-spacing:0.183px;-webkit-text-stroke:0.3px;">confirmation:</div>
<div class="t " id="t30" style="left:205.30px;top:383.00px;font:normal 10px/20px 'DejaVu Sans','Liberation Sans',sans-serif;color:#000;letter-spacing:-0.152px;">Merci de votre inscription</div>
<div class="t " id="t31" style="left:423.00px;top:420.00px;font:normal 11px/20px 'DejaVu Sans','Liberation Sans',sans-serif;color:#000;letter-spacing:0.182px;">-- Styles --</div>
<div class="t " id="t32" style="left:542.70px;top:420.00px;font:normal 11px/20px 'DejaVu Sans','Liberation Sans',sans-serif;color:#000;letter-spacing:-0.600px;">Paragraph</div>
<div class="t " id="t33" style="left:632.50px;top:420.00px;font:normal 11px/20px 'DejaVu Sans','Liberation Sans',sans-serif;color:#000;letter-spacing:-0.200px;">-- Font family --</div>
<div class="t " id="t34" style="left:58.80px;top:492.00px;font:normal 12px/20px 'Liberation Sans',sans-serif;color:#222;letter-spacing:0.371px;-webkit-text-stroke:0.15px;">Bonjour.</div>
<div class="t " id="t35" style="left:58.80px;top:520.00px;font:normal 12px/20px 'Liberation Sans',sans-serif;color:#222;letter-spacing:0.077px;-webkit-text-stroke:0.15px;">Nous avons bien reçu votre inscrption à notre InfoLettre et nous vous en remercions.</div>
<div class="t " id="t36" style="left:59.80px;top:548.00px;font:normal 12px/20px 'Liberation Sans',sans-serif;color:#222;letter-spacing:0.080px;-webkit-text-stroke:0.15px;">Afin de vérifier que vous êtes bien propriétaire de cette adresse et à l'initiative de l'inscription, merci de cliquer sur le lien suivant : [lien d'activation]</div>
<div class="t " id="t37" style="left:59.80px;top:576.00px;font:normal 12px/20px 'Liberation Sans',sans-serif;color:#222;letter-spacing:0.090px;-webkit-text-stroke:0.15px;">Avec nos cordiales salutations.</div>
</body>
</html>
